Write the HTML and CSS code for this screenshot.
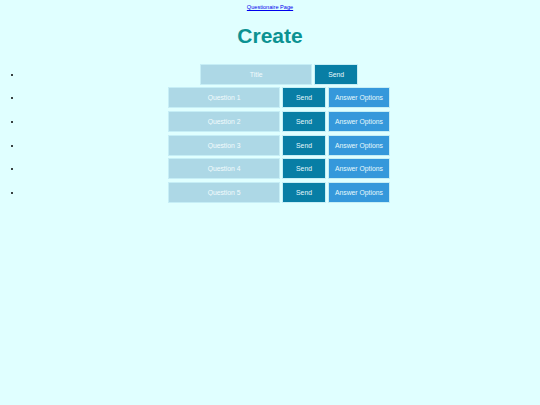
FILE: index.html
```html
<!DOCTYPE html>
<html>
<head>
<meta charset="utf-8">
<link rel="stylesheet" href="styles.css">
</head>
<body>
<nav class="nav"><a href="#">Questionaire Page</a></nav>
<h1 class="heading">Create</h1>
<ul class="list">
  <li class="item"><div class="row"><input class="field" placeholder="Title"><button class="send">Send</button></div></li>
  <li class="item"><div class="row"><input class="field" placeholder="Question 1"><button class="send">Send</button><button class="options">Answer Options</button></div></li>
  <li class="item"><div class="row"><input class="field" placeholder="Question 2"><button class="send">Send</button><button class="options">Answer Options</button></div></li>
  <li class="item"><div class="row"><input class="field" placeholder="Question 3"><button class="send">Send</button><button class="options">Answer Options</button></div></li>
  <li class="item"><div class="row"><input class="field" placeholder="Question 4"><button class="send">Send</button><button class="options">Answer Options</button></div></li>
  <li class="item"><div class="row"><input class="field" placeholder="Question 5"><button class="send">Send</button><button class="options">Answer Options</button></div></li>
</ul>
</body>
</html>
```
FILE: styles.css
```css
html, body {
  background: #e0ffff;
}
body {
  margin: 4px;
  font-family: "Liberation Sans", Arial, sans-serif;
  font-size: 8px;
}
.nav {
  text-align: center;
  font-size: 5.6px;
  line-height: 6.5px;
}
.nav a {
  color: #0000ee;
}
.heading {
  margin: 13px 0 15px;
  text-align: center;
  font-size: 21px;
  line-height: 24px;
  font-weight: bold;
  color: #0b9292;
}
.list {
  margin: 0;
  padding-left: 18px;
}
.item {
  font-size: 8px;
}
.row {
  display: flex;
  justify-content: center;
  align-items: center;
  gap: 2.2px;
  height: 23.6px;
}
.field, .send, .options {
  box-sizing: border-box;
  height: 21px;
  margin: 0;
  padding: 0;
  border: 1px solid #c6eef6;
  font-family: "Liberation Sans", Arial, sans-serif;
  font-size: 6.8px;
  color: #e6f8fc;
  text-align: center;
}
.field {
  width: 112px;
  background: #add8e6;
}
.field::placeholder {
  color: #f2fbfd;
}
.send {
  width: 43.5px;
  background: #087ea5;
}
.options {
  width: 62px;
  background: #3598db;
}
```
